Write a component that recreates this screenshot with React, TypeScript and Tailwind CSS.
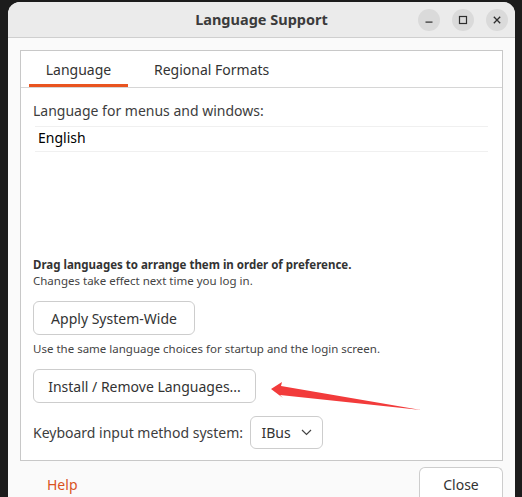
import React from "react";

const font = { fontFamily: '"Noto Sans", "Open Sans", sans-serif' };

function WinBtn({ children }: { children: React.ReactNode }) {
  return (
    <div className="w-[22px] h-[22px] rounded-full bg-[#dadada] flex items-center justify-center text-[#2e2e2e]">
      {children}
    </div>
  );
}

export default function App() {
  return (
    <div className="relative w-[522px] h-[497px] overflow-hidden bg-[#1c1c1c] pl-[8px] pr-[7px] pt-[2px]" style={font}>
      <div className="h-full flex flex-col bg-[#fafafa] rounded-t-[12px] overflow-hidden">
        {/* title bar */}
        <div className="h-[36px] shrink-0 bg-[#ebebeb] border-b border-[#cfcfcf] grid grid-cols-[1fr_auto_1fr] items-center">
          <div />
          <div className="text-[14.5px] font-bold text-[#3b3b3b]">Language Support</div>
          <div className="flex justify-end items-center gap-[12px] pr-[7px]">
            <WinBtn>
              <svg width="10" height="10" viewBox="0 0 10 10"><rect x="1.5" y="6.5" width="7" height="1.2" fill="currentColor" /></svg>
            </WinBtn>
            <WinBtn>
              <svg width="10" height="10" viewBox="0 0 10 10"><rect x="1.5" y="1.5" width="7" height="7" fill="none" stroke="currentColor" strokeWidth="1.2" /></svg>
            </WinBtn>
            <WinBtn>
              <svg width="10" height="10" viewBox="0 0 10 10"><path d="M1.8 1.8 L8.2 8.2 M8.2 1.8 L1.8 8.2" stroke="currentColor" strokeWidth="1.3" /></svg>
            </WinBtn>
          </div>
        </div>

        {/* body */}
        <div className="flex-1 flex flex-col px-[12px] pt-[12px]">
          <div className="border border-[#c8c8c8] bg-white h-[411px] flex flex-col">
            {/* tabs */}
            <div className="h-[37px] shrink-0 border-b border-[#d6d6d6] flex items-end pl-[8px]">
              <div className="w-[99px] h-full flex flex-col justify-end">
                <div className="flex-1 flex items-center justify-center text-[14px] text-[#333] pt-[3px]">Language</div>
                <div className="h-[3px] bg-[#e95420]" />
              </div>
              <div className="h-full flex items-center pl-[26px] text-[14px] text-[#333]">Regional Formats</div>
            </div>

            {/* content */}
            <div className="flex-1 flex flex-col px-[12px] pt-[13px]">
              <div className="text-[14px] text-[#3d3d3d] leading-[20px] h-[20px]">Language for menus and windows:</div>
              <div className="mt-[5px] mx-[2px] border-t border-b border-[#f0f0f0] h-[26px] flex items-center pl-[3px] pb-[3px] text-[14px] text-black">
                English
              </div>
              <div className="h-[105px] shrink-0" />
              <div className="text-[11.5px] font-bold text-[#333] leading-[16px] h-[16px]">Drag languages to arrange them in order of preference.</div>
              <div className="text-[11.5px] text-[#444] leading-[16px] h-[16px]">Changes take effect next time you log in.</div>
              <div className="mt-[12px] w-[162px] h-[34px] shrink-0 rounded-[6px] border border-[#cdcdcd] bg-white flex items-center justify-center text-[14px] text-[#333]">
                Apply System-Wide
              </div>
              <div className="mt-[6px] text-[11.5px] text-[#444] leading-[16px] h-[16px]">Use the same language choices for startup and the login screen.</div>
              <div className="mt-[12px] w-[223px] h-[34px] shrink-0 rounded-[6px] border border-[#cdcdcd] bg-white flex items-center justify-center text-[14px] text-[#333]">
                Install / Remove Languages...
              </div>
              <div className="mt-[13px] flex items-center gap-[7px]">
                <div className="text-[14px] text-[#3d3d3d]">Keyboard input method system:</div>
                <div className="w-[73px] h-[33px] rounded-[6px] border border-[#cdcdcd] bg-white flex items-center justify-center gap-[10px] text-[14px] text-[#333]">
                  <span>IBus</span>
                  <svg width="11" height="7" viewBox="0 0 11 7"><path d="M1 1 L5.5 5.5 L10 1" fill="none" stroke="#444" strokeWidth="1.2" /></svg>
                </div>
              </div>
            </div>
          </div>

          {/* bottom row */}
          <div className="flex justify-between items-start mt-[6px]">
            <div className="pl-[27px] pt-[8px] text-[14px] leading-[20px] text-[#d9531e]">Help</div>
            <div className="w-[84px] h-[40px] rounded-t-[6px] border border-b-0 border-[#cdcdcd] bg-white flex items-start justify-center text-[14px] leading-[20px] text-[#333] pt-[7px]">
              Close
            </div>
          </div>
        </div>
      </div>

      {/* red annotation arrow */}
      <svg className="absolute left-0 top-0 pointer-events-none" width="522" height="497" viewBox="0 0 522 497">
        <polygon points="271,389 282,382 281,386 421,410 280,395 283,398" fill="#f23b3b" />
      </svg>
    </div>
  );
}
